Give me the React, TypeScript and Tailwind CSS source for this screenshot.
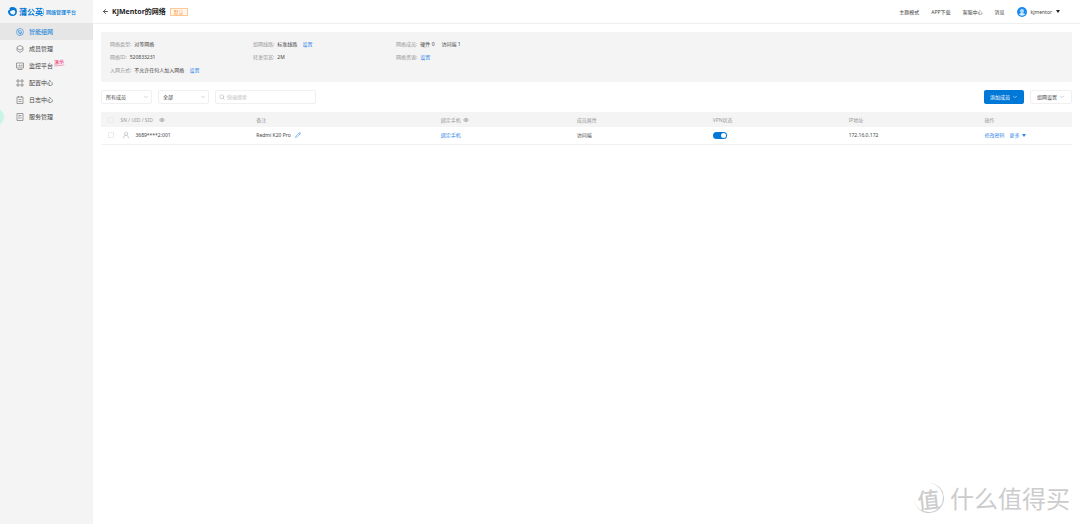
import type { ReactNode } from "react";
import { ArrowLeft, ChevronDown, Pencil, Search, UserRound } from "lucide-react";

const navItems = [
  {
    label: "智能组网",
    path: "M8 1a7 7 0 1 0 0 14A7 7 0 1 0 8 1M4 3c0 4 2 7 6 8M8 5a3 3 0 1 0 0 6a3 3 0 1 0 0-6M11 8c0 3-2 5-4 7",
    active: true,
  },
  {
    label: "成员管理",
    path: "M8 1l6 3v3L8 10 2 7V4ZM2 7v4l6 4 6-4V7",
  },
  {
    label: "监控平台",
    path: "M1 2h14v10H1ZM3 15h10M4 9V7M7 9V5M10 9V6M12 9V5",
    tag: "演示",
  },
  {
    label: "配置中心",
    path: "M2 2h4v4H2ZM10 2h4v4h-4ZM2 10h4v4H2ZM10 10h4v4h-4Z",
  },
  {
    label: "日志中心",
    path: "M2 2h12v13H2ZM5 0v3M11 0v3M5 7h6M5 11h6",
  },
  {
    label: "服务管理",
    path: "M2 1h12v14H2ZM5 5h6M5 8h3M5 11h2M10 8v3",
  },
];

const headerLinks = ["主题模式", "APP下载", "客服中心", "消息"];

function TextLink({ children }: { children: ReactNode }) {
  return (
    <a href="#" className="text-[#2f86ea]">
      {children}
    </a>
  );
}

function Info({ label, children }: { label: string; children: ReactNode }) {
  return (
    <div className="flex gap-[3px]">
      <dt className="text-[#999]">{label}:</dt>
      <dd className="flex gap-[5px]">{children}</dd>
    </div>
  );
}

function Filter({ label, option }: { label: string; option: string }) {
  return (
    <div className="relative w-[51px]">
      <select
        aria-label={label}
        className="block h-[14px] w-full appearance-none rounded-xs border border-[#f0f0f0] bg-white pl-1"
      >
        <option>{option}</option>
      </select>
      <ChevronDown className="pointer-events-none absolute top-1 right-[3px] size-1.5 text-[#aaa]" />
    </div>
  );
}

function EyeIcon() {
  return (
    <svg viewBox="0 0 12 8" className="h-1 w-1.5" fill="none" stroke="#999" strokeWidth="1.5" aria-hidden="true">
      <path d="M1 4c2-4 8-4 10 0-2 4-8 4-10 0Z" />
      <circle cx="6" cy="4" r="1.5" />
    </svg>
  );
}

function Caret({ color }: { color: string }) {
  return (
    <svg viewBox="0 0 8 6" className="h-[3px] w-1" aria-hidden="true">
      <path d="M0 0h8L4 6Z" fill={color} />
    </svg>
  );
}

function RowCheck({ label }: { label: string }) {
  return (
    <input
      type="checkbox"
      aria-label={label}
      className="block size-1.5 appearance-none rounded-[1px] border border-[#ebebeb]"
    />
  );
}

export default function App() {
  return (
    <div className="relative flex min-h-screen bg-white font-['Noto_Sans','Noto_Sans_CJK_SC',sans-serif] text-[5px] leading-[8px] text-[#444]">
      {/* Sidebar */}
      <aside className="relative w-[93px] shrink-0 bg-[#f4f4f4]">
        <div className="flex h-[23px] items-center pl-2 text-[#0078d7]">
          <svg viewBox="0 0 20 20" className="size-[9px]" aria-hidden="true">
            <circle cx="10" cy="10" r="10" fill="#0078d7" />
            <path d="M5 9c3 0 5-3 9-2 3 2 3 6 0 9-4 2-8 0-9-3Z" fill="#f4f4f4" />
            <path d="M0 2l5 2-3 4-2-1Z" fill="#f4f4f4" />
          </svg>
          <span className="ml-0.5 text-[8px] font-bold">蒲公英</span>
          <span className="border-l border-[#8dbfe9] pl-0.5 text-[5px] leading-[6px] font-medium">
            网络管理平台
          </span>
        </div>
        <nav>
          {navItems.map((item) => (
            <a
              key={item.label}
              href="#"
              className={`flex h-[17px] items-center gap-[5px] pl-4 text-[6px] ${
                item.active ? "bg-[#e6e6e6] text-[#0078d7]" : "text-[#444]"
              }`}
            >
              <svg
                viewBox="0 0 16 16"
                className="size-2 opacity-75"
                fill="none"
                stroke="currentColor"
                strokeWidth="1.3"
                aria-hidden="true"
              >
                <path d={item.path} />
              </svg>
              {item.label}
              {item.tag && (
                <span className="-ml-1 mb-1.5 -rotate-6 border-b border-[#f9a0bd] text-[5px] leading-[6px] font-medium text-[#f0427a]">
                  {item.tag}
                </span>
              )}
            </a>
          ))}
        </nav>
        <div className="absolute top-[108px] -left-3.5 size-[18px] rounded-full bg-[#c9f5e4]" />
      </aside>

      <div className="min-w-0 flex-1">
        {/* Top bar */}
        <header className="flex h-6 items-center border-b border-[#eee] pr-5 pl-[9px]">
          <a href="#" aria-label="返回">
            <ArrowLeft className="size-[7px]" strokeWidth={3} />
          </a>
          <h1 className="ml-[3px] text-[7px] font-bold text-[#222]">KJMentor的网络</h1>
          <span className="ml-1 border border-[#ffc894] bg-[#fff8f0] px-[3px] text-[5px] leading-[6px] text-[#ff9a3c]">
            默认
          </span>
          <nav className="ml-auto flex items-center gap-3">
            {headerLinks.map((label) => (
              <a key={label} href="#">
                {label}
              </a>
            ))}
            <button className="flex items-center gap-1">
              <svg viewBox="0 0 20 20" className="size-[10px]" aria-hidden="true">
                <circle cx="10" cy="10" r="10" fill="#1d8cf0" />
                <circle cx="10" cy="8" r="4" fill="#b5dcff" />
                <path d="M4 15c1-4 11-4 12 0-3 3-9 3-12 0Z" fill="#d9edff" />
              </svg>
              kjmentor
              <Caret color="#222" />
            </button>
          </nav>
        </header>

        <main className="px-2 pt-2">
          {/* Network summary */}
          <dl className="grid h-[50px] grid-cols-[143px_143px_1fr] content-center gap-y-[5px] rounded-xs bg-[#f4f4f4] pl-[9px]">
            <Info label="网络类型">对等网络</Info>
            <Info label="组网线路">
              标准线路 <TextLink>设置</TextLink>
            </Info>
            <Info label="网络成员">
              <span className="mr-0.5">硬件 0</span>
              <span>访问端 1</span>
            </Info>
            <Info label="网络ID">520833231</Info>
            <Info label="转发带宽">2M</Info>
            <Info label="网络资源">
              <TextLink>设置</TextLink>
            </Info>
            <Info label="入网方式">
              不允许任何人加入网络 <TextLink>设置</TextLink>
            </Info>
          </dl>

          {/* Filters and actions */}
          <div className="mt-2 flex items-center gap-1.5">
            <Filter label="成员" option="所有成员" />
            <Filter label="类型" option="全部" />
            <label className="flex h-[14px] w-[101px] items-center gap-0.5 rounded-xs border border-[#f0f0f0] px-[3px]">
              <Search className="size-1.5 text-[#aaa]" />
              <input
                type="text"
                aria-label="快速搜索"
                placeholder="快速搜索"
                className="min-w-0 flex-1 placeholder:text-[#bbb]"
              />
            </label>
            <button className="ml-auto flex h-[14px] items-center gap-0.5 rounded-xs bg-[#0078d7] px-1.5 text-white">
              添加成员
              <ChevronDown className="size-1.5" />
            </button>
            <button className="flex h-[14px] items-center gap-0.5 rounded-xs border border-[#f0f0f0] px-1.5">
              组网设置
              <ChevronDown className="size-1.5 text-[#999]" />
            </button>
          </div>

          {/* Members */}
          <table className="mt-2 w-full table-fixed text-left">
            <colgroup>
              <col className="w-[2%]" />
              <col className="w-[14%]" />
              <col className="w-[19%]" />
              <col className="w-[14%]" />
              <col className="w-[14%]" />
              <col className="w-[14%]" />
              <col className="w-[14%]" />
              <col className="w-[9%]" />
            </colgroup>
            <thead className="bg-[#f4f4f4] text-[#999]">
              <tr className="h-[15px]">
                <th className="pl-[7px]">
                  <RowCheck label="全选" />
                </th>
                <th className="font-normal">
                  <span className="flex items-center gap-1.5">
                    SN / UID / SID <EyeIcon />
                  </span>
                </th>
                <th className="font-normal">备注</th>
                <th className="font-normal">
                  <span className="flex items-center gap-0.5">
                    绑定手机 <EyeIcon />
                  </span>
                </th>
                <th className="font-normal">成员属性</th>
                <th className="font-normal">VPN状态</th>
                <th className="font-normal">IP地址</th>
                <th className="font-normal">操作</th>
              </tr>
            </thead>
            <tbody>
              <tr className="h-[17px] border-b border-[#f2f2f2]">
                <td className="pl-[7px]">
                  <RowCheck label="选择 3689****2:001" />
                </td>
                <td>
                  <span className="flex items-center gap-[5px] pl-0.5">
                    <UserRound className="size-2 text-[#bbb]" strokeWidth={2} />
                    3689****2:001
                  </span>
                </td>
                <td>
                  <span className="flex items-center gap-1">
                    Redmi K20 Pro
                    <Pencil className="size-1.5 text-[#2f86ea]" />
                  </span>
                </td>
                <td>
                  <TextLink>绑定手机</TextLink>
                </td>
                <td>访问端</td>
                <td>
                  <input
                    type="checkbox"
                    role="switch"
                    aria-label="VPN状态"
                    defaultChecked
                    className="flex h-[7px] w-[14px] appearance-none items-center justify-end rounded-full bg-[#0078d7] pr-px before:size-[5px] before:rounded-full before:bg-white"
                  />
                </td>
                <td>172.16.0.172</td>
                <td>
                  <span className="flex items-center gap-[5px]">
                    <TextLink>修改密码</TextLink>
                    <button className="flex items-center gap-0.5 text-[#2f86ea]">
                      更多
                      <Caret color="#2f86ea" />
                    </button>
                  </span>
                </td>
              </tr>
            </tbody>
          </table>
        </main>
      </div>

      {/* Watermark */}
      <div className="pointer-events-none absolute right-2.5 bottom-2.5 flex items-center gap-1.5 font-['Noto_Sans_CJK_SC',sans-serif] text-[24px] leading-[32px] text-[#ccc]">
        <span className="flex size-[30px] -rotate-6 items-center justify-center rounded-full border-r border-b border-[#ccc] text-[22px] font-medium">
          值
        </span>
        <span>什么值得买</span>
      </div>
    </div>
  );
}
